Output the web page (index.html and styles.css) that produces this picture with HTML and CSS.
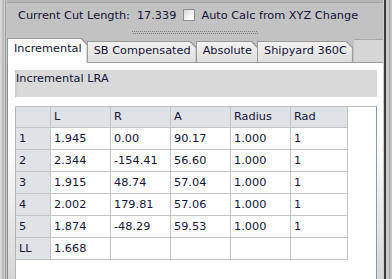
FILE: index.html
```html
<!DOCTYPE html>
<html lang="en">
  <head>
    <meta charset="utf-8" />
    <title>LRA</title>
    <link rel="stylesheet" href="styles.css">
  </head>
  <body>
    <div class="frame">
      <div class="edge-left"></div>
      <div class="main">
        <div class="topline"></div>
        <div class="cut-row">
          <span>Current Cut Length:</span>
          <span class="cut-value">17.339</span>
          <span class="check"></span>
          <span>Auto Calc from XYZ Change</span>
        </div>
        <div class="splitter-wrap"><div class="splitter"></div></div>
        <div class="tabs">
          <div class="tab active"><div class="tab-face">Incremental</div></div>
          <div class="tab"><div class="tab-face">SB Compensated</div></div>
          <div class="tab"><div class="tab-face">Absolute</div></div>
          <div class="tab"><div class="tab-face">Shipyard 360C</div></div>
          <div class="tab-fill"></div>
        </div>
        <div class="panel">
          <div class="label-bar">Incremental LRA</div>
          <div class="pane">
            <div class="grid" id="grid"></div>
          </div>
        </div>
      </div>
      <div class="edge-right"></div>
    </div>

    <script>
      const head = ["", "L", "R", "A", "Radius", "Rad"];
      const rows = [
        ["1", "1.945", "0.00", "90.17", "1.000", "1"],
        ["2", "2.344", "-154.41", "56.60", "1.000", "1"],
        ["3", "1.915", "48.74", "57.04", "1.000", "1"],
        ["4", "2.002", "179.81", "57.06", "1.000", "1"],
        ["5", "1.874", "-48.29", "59.53", "1.000", "1"],
        ["LL", "1.668", "", "", "", ""],
      ];
      const grid = document.getElementById("grid");
      const cell = (txt, cls) => {
        const d = document.createElement("div");
        d.className = cls;
        d.textContent = txt;
        grid.appendChild(d);
      };
      head.forEach((h) => cell(h, "cell hd"));
      rows.forEach((r) =>
        r.forEach((v, i) => cell(v, i === 0 ? "cell rh" : "cell"))
      );
    </script>
  </body>
</html>
```

FILE: styles.css
```css
* {
  margin: 0;
  padding: 0;
  box-sizing: border-box;
}
body {
  background: #c2c2c2;
  font-family: "DejaVu Sans", sans-serif;
  font-size: 11.3px;
  color: #141438;
  overflow: hidden;
}
.frame {
  display: flex;
  height: 279px;
}
.edge-left {
  width: 7px;
  background: linear-gradient(
    90deg,
    #d6d6d6 0 2px,
    #bdbdbd 2px 4px,
    #d0d0d0 4px 5px,
    #9c9c9c 5px 6px,
    #c8c8c8 6px 7px
  );
}
.edge-right {
  width: 9px;
  background: linear-gradient(
    90deg,
    #cfcfcf 0 1px,
    #3c3c3c 1px 3px,
    #cacaca 3px 6px,
    #9a9a9a 6px 7px,
    #c4c4c4 7px 9px
  );
}
.main {
  flex: 1;
  display: flex;
  flex-direction: column;
  min-width: 0;
}
.topline {
  height: 3px;
  background: #b6b6b6;
  border-bottom: 1px solid #a2a2a2;
}
.cut-row {
  height: 24px;
  display: flex;
  align-items: center;
  padding-left: 11px;
  white-space: nowrap;
}
.cut-value {
  margin-left: 7px;
}
.check {
  width: 12px;
  height: 12px;
  margin: 0 6px 0 7px;
  border: 1px solid #8c8d8e;
  background: linear-gradient(135deg, #d4d4d4, #f6f6f6 60%, #ffffff);
}
.splitter-wrap {
  height: 12px;
  padding-top: 4px;
  display: flex;
  justify-content: center;
}
.splitter {
  width: 126px;
  height: 1px;
  background: repeating-linear-gradient(90deg, #7c7c7c 0 1px, transparent 1px 2px);
}
.splitter::after {
  content: "";
  display: block;
  height: 1px;
  margin-top: 2px;
  background: repeating-linear-gradient(90deg, transparent 0 1px, #7c7c7c 1px 2px);
}
.tabs {
  height: 23px;
  display: flex;
  align-items: flex-end;
}
.tab {
  height: 21px;
  margin-left: -1px;
  padding: 1px 1px 0;
  background: #9a9a9a;
  clip-path: polygon(0 0, calc(100% - 6px) 0, 100% 6px, 100% 100%, 0 100%);
  white-space: nowrap;
}
.tab-face {
  height: 100%;
  padding: 2px 5px 0 6px;
  background: linear-gradient(#f2f2f2, #dedede);
  clip-path: polygon(0 0, calc(100% - 6px) 0, 100% 6px, 100% 100%, 0 100%);
}
.tab.active {
  height: 25px;
  margin-left: 0;
  margin-bottom: -1px;
  position: relative;
  z-index: 1;
}
.tab.active .tab-face {
  background: #fff;
  padding: 3px 5px 0 6px;
}
.tab-fill {
  flex: 1;
  height: 23px;
  margin-left: 1px;
  background: #d6d6d6;
  border-top: 1px solid #a8a8a8;
}
.panel {
  flex: 1;
  border-top: 1px solid #9a9a9a;
  border-left: 1px solid #8e8e8e;
  background: linear-gradient(#fff 35%, #d6d6d6);
  padding: 7px 6px 0 7px;
  display: flex;
  flex-direction: column;
}
.label-bar {
  height: 27px;
  padding: 2px 1px;
  line-height: 14px;
  background: linear-gradient(90deg, #c6c6c6 0, #d9d9d9 3px, #d9d9d9);
}
.pane {
  flex: 1;
  margin-top: 9px;
  background: #fff;
  border-top: 1px solid #bdbdbd;
  border-left: 1px solid #b4b4b4;
  border-right: 1px solid #7f9db9;
}
.grid {
  display: grid;
  grid-template-columns: 35px 60px 60px 60px 60px 57px;
  grid-template-rows: 21px;
  grid-auto-rows: 22px;
}
.cell {
  border-right: 1px solid #c4c4c4;
  border-bottom: 1px solid #c4c4c4;
  padding: 4px 0 0 3px;
  line-height: 14px;
  white-space: nowrap;
}
.hd {
  background: #dfe2e7;
  padding-top: 3px;
}
.rh {
  background: #dfe2e7;
}
```
